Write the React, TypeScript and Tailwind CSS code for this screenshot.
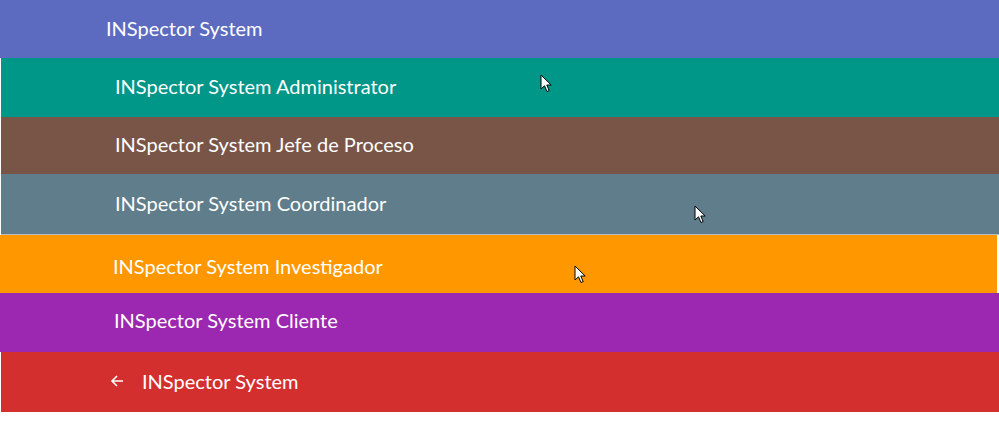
const font = { fontFamily: 'Lato, "Liberation Sans", sans-serif' };

function Cursor({ className }: { className: string }) {
  return (
    <svg
      className={`absolute ${className}`}
      width="13"
      height="19"
      viewBox="0 0 13 19"
      aria-hidden="true"
    >
      <path
        d="M1 1 L1 15 L4.5 11.8 L7 17.5 L9.2 16.6 L6.8 11 L11.2 11 Z"
        fill="#fff"
        stroke="#000"
        strokeWidth="1"
        strokeLinejoin="round"
      />
    </svg>
  );
}

export default function App() {
  return (
    <div className="relative w-[999px] h-[427px] bg-white text-white text-[20px] flex flex-col" style={font}>
      {/* Top header */}
      <div className="h-[58px] shrink-0 bg-[#5c6bc0] flex items-center pl-[106px] pb-[3px]">
        INSpector System
      </div>

      {/* Role bars */}
      <div className="h-[59px] shrink-0 ml-px bg-[#009688] flex items-center pl-[114px] pb-[4px]">
        INSpector System Administrator
      </div>
      <div className="h-[57px] shrink-0 ml-px bg-[#795548] flex items-center pl-[114px] pb-[3px]">
        INSpector System Jefe de Proceso
      </div>
      <div className="h-[61px] shrink-0 ml-px bg-[#607d8b] flex items-center pl-[114px] pb-[3px] border-b border-[#b8bcbe]">
        INSpector System Coordinador
      </div>
      <div className="h-[58px] shrink-0 mr-[2px] bg-[#ff9800] flex items-center pl-[113px] pt-[3px]">
        INSpector System Investigador
      </div>
      <div className="h-[59px] shrink-0 bg-[#9c27b0] flex items-center pl-[114px] pb-[6px]">
        INSpector System Cliente
      </div>
      <div className="h-[60px] shrink-0 ml-px bg-[#d32f2f] flex items-center pl-[109px] pb-[3px]">
        <svg width="14" height="14" viewBox="0 0 14 14" aria-hidden="true" className="mr-[18px]">
          <path
            d="M13 7 H2 M7 2 L2 7 L7 12"
            fill="none"
            stroke="#fff"
            strokeWidth="1.6"
          />
        </svg>
        INSpector System
      </div>

      <Cursor className="left-[540px] top-[74px]" />
      <Cursor className="left-[694px] top-[205px]" />
      <Cursor className="left-[574px] top-[265px]" />
    </div>
  );
}
